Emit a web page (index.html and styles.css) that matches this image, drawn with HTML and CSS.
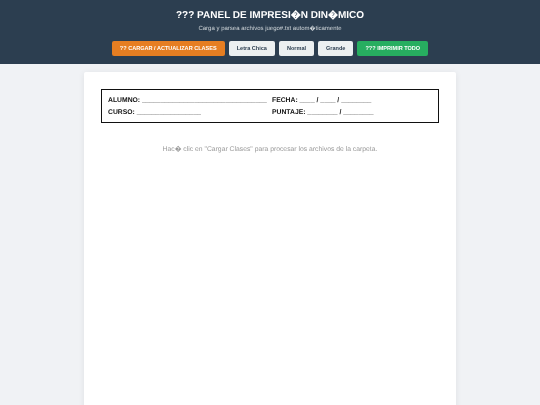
FILE: index.html
```html
<!DOCTYPE html>
<html>
<head>
  <meta charset="utf-8">
  <link rel="stylesheet" href="styles.css">
</head>
<body>
  <div class="header">
    <h1>??? PANEL DE IMPRESI�N DIN�MICO</h1>
    <p>Carga y parsea archivos juego#.txt autom�ticamente</p>
    <div class="button-row">
      <button class="btn btn-orange">?? CARGAR / ACTUALIZAR CLASES</button>
      <button class="btn">Letra Chica</button>
      <button class="btn">Normal</button>
      <button class="btn">Grande</button>
      <button class="btn btn-green">??? IMPRIMIR TODO</button>
    </div>
  </div>
  <div class="page">
    <div class="sheet">
      <div class="student-box">
        <div class="student-row">
          <span class="col-left">ALUMNO: _________________________________</span>
          <span>FECHA: ____ / ____ / ________</span>
        </div>
        <div class="student-row">
          <span class="col-left">CURSO: _________________</span>
          <span>PUNTAJE: ________ / ________</span>
        </div>
      </div>
      <p class="hint">Hac� clic en "Cargar Clases" para procesar los archivos de la carpeta.</p>
    </div>
  </div>
</body>
</html>
```

FILE: styles.css
```css
html {
  height: 100%;
  background-color: #f0f2f5;
}

body {
  height: 100%;
  margin: 0;
  font-family: "Liberation Sans", Arial, sans-serif;
  text-rendering: geometricPrecision;
  overflow: hidden;
  filter: blur(0.3px); /* the reference is a downscaled capture, slightly soft */
}

.header {
  height: 64px;
  box-sizing: border-box;
  padding-top: 9px;
  background-color: #2c3e50;
  color: #ffffff;
  text-align: center;
}

.header h1 {
  margin: 0;
  font-size: 10px;
  line-height: 14px;
  font-weight: bold;
}

.header p {
  margin: 2px 0 0;
  font-size: 6px;
  line-height: 8px;
  color: #d0d6da;
}

.button-row {
  display: flex;
  justify-content: center;
  gap: 4px;
  margin-top: 8px;
}

.btn {
  height: 14.5px;
  padding: 0 8px;
  border: none;
  border-radius: 2px;
  background-color: #ecf0f1;
  color: #2c3e50;
  font-family: inherit;
  font-size: 5.55px;
  font-weight: bold;
}

.btn-orange {
  background-color: #e67e22;
  color: #ffffff;
}

.btn-green {
  background-color: #27ae60;
  color: #ffffff;
}

.page {
  display: flex;
  justify-content: center;
  padding-top: 8px;
}

.sheet {
  width: 372px;
  height: 340px;
  box-sizing: border-box;
  padding: 17px;
  border-radius: 2px;
  background-color: #ffffff;
  box-shadow: 0 1px 6px rgba(0, 0, 0, 0.08);
}

.student-box {
  height: 34px;
  box-sizing: border-box;
  padding: 5px 6px;
  border: 1px solid #111111;
  color: #111111;
  font-size: 6.8px;
  font-weight: bold;
}

.student-row {
  display: flex;
  height: 12px;
  line-height: 12px;
}

.col-left {
  width: 164px;
  flex-shrink: 0;
}

.hint {
  margin: 22px 0 0;
  text-align: center;
  font-size: 6.8px;
  line-height: 10px;
  color: #999999;
}
```
